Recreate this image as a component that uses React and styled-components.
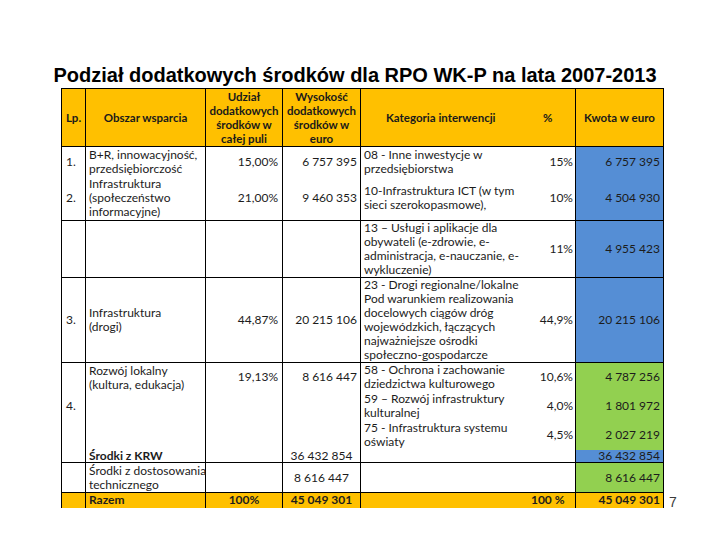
import React from 'react';
import styled, { createGlobalStyle } from 'styled-components';

const Global = createGlobalStyle`
  html, body { margin: 0; padding: 0; background: #fff; }
  #root { width: 720px; height: 540px; }
`;

const YELLOW = '#FFC000';
const BLUE = '#558ED5';
const GREEN = '#92D050';

const Slide = styled.div`
  width: 720px;
  height: 540px;
  box-sizing: border-box;
  background: #fff;
  display: flex;
  flex-direction: column;
  padding-top: 64px;
`;

const Title = styled.h1`
  margin: 0;
  font-family: "Liberation Sans", Arial, sans-serif;
  font-weight: 700;
  font-size: 20px;
  line-height: 22px;
  color: #000;
  text-align: center;
  padding-right: 10px;
`;

const Body = styled.div`
  display: flex;
  align-items: flex-end;
  padding-left: 61px;
  margin-top: 2px;
`;

const PageNo = styled.div`
  font-family: "Liberation Sans", Arial, sans-serif;
  font-size: 14px;
  line-height: 16px;
  color: #3a3a3a;
  margin-left: 5px;
  margin-bottom: -2px;
`;

const Table = styled.table`
  border-collapse: collapse;
  table-layout: fixed;
  width: 602px;
  font-family: "Lato", "Open Sans", sans-serif;
  font-size: 12px;
  color: #1c1c1c;
`;

const Row = styled.tr`
  height: ${p => p.$h}px;
`;

const Cell = styled.td`
  border: 1px solid #000;
  border-top-style: ${p => (p.$openTop ? 'hidden' : 'solid')};
  border-bottom-style: ${p => (p.$openBottom ? 'hidden' : 'solid')};
  border-right-style: ${p => (p.$openRight ? 'hidden' : 'solid')};
  padding: ${p => p.$pt || 0}px ${p => (p.$pr ?? 3)}px 0 ${p => (p.$pl ?? 3)}px;
  text-align: ${p => p.$align || 'left'};
  vertical-align: ${p => p.$valign || 'middle'};
  background: ${p => p.$bg || 'transparent'};
  font-weight: ${p => (p.$bold ? 700 : 400)};
  line-height: ${p => p.$lh || 14}px;
  white-space: nowrap;
`;

const Head = styled.th`
  border: 1px solid #000;
  border-right-style: ${p => (p.$openRight ? 'hidden' : 'solid')};
  background: ${YELLOW};
  font-weight: 700;
  font-size: 11.5px;
  text-align: center;
  vertical-align: middle;
  line-height: 14px;
  padding: 0;
  color: #1a1a1a;
  white-space: nowrap;
`;

const Lines = ({ t }) =>
  t.split('\n').map((l, i, a) => (
    <React.Fragment key={i}>
      {l}
      {i < a.length - 1 && <br />}
    </React.Fragment>
  ));

export default function App() {
  return (
    <>
      <Global />
      <Slide>
        <Title>Podział dodatkowych środków dla RPO WK-P na lata 2007-2013</Title>
        <Body>
          <Table>
            <colgroup>
              <col style={{ width: 24 }} />
              <col style={{ width: 120 }} />
              <col style={{ width: 77 }} />
              <col style={{ width: 78 }} />
              <col style={{ width: 160 }} />
              <col style={{ width: 55 }} />
              <col style={{ width: 88 }} />
            </colgroup>
            <thead>
              <Row $h={58}>
                <Head>Lp.</Head>
                <Head>Obszar wsparcia</Head>
                <Head><Lines t={'Udział\ndodatkowych\nśrodków w\ncałej puli'} /></Head>
                <Head><Lines t={'Wysokość\ndodatkowych\nśrodków  w\neuro'} /></Head>
                <Head $openRight>Kategoria interwencji</Head>
                <Head>%</Head>
                <Head>Kwota w euro</Head>
              </Row>
            </thead>
            <tbody>
              <Row $h={30}>
                <Cell $openBottom $pl={4}>1.</Cell>
                <Cell $openBottom><Lines t={'B+R, innowacyjność,\nprzedsiębiorczość'} /></Cell>
                <Cell $openBottom $align="right" $pr={4}>15,00%</Cell>
                <Cell $openBottom $align="right">6 757 395</Cell>
                <Cell $openBottom $openRight><Lines t={'08 - Inne inwestycje w\nprzedsiębiorstwa'} /></Cell>
                <Cell $openBottom $align="right" $pr={2}>15%</Cell>
                <Cell $openBottom $align="right" $bg={BLUE}>6 757 395</Cell>
              </Row>
              <Row $h={44}>
                <Cell $pl={4}>2.</Cell>
                <Cell><Lines t={'Infrastruktura\n(społeczeństwo\ninformacyjne)'} /></Cell>
                <Cell $align="right" $pr={4}>21,00%</Cell>
                <Cell $align="right">9 460 353</Cell>
                <Cell $openRight><Lines t={'10-Infrastruktura ICT (w tym\nsieci szerokopasmowe),'} /></Cell>
                <Cell $align="right" $pr={2}>10%</Cell>
                <Cell $align="right" $bg={BLUE}>4 504 930</Cell>
              </Row>
              <Row $h={57}>
                <Cell />
                <Cell />
                <Cell />
                <Cell />
                <Cell $openRight>
                  <Lines t={'13 – Usługi i aplikacje dla\nobywateli (e-zdrowie, e-\nadministracja, e-nauczanie, e-\nwykluczenie)'} />
                </Cell>
                <Cell $align="right" $pr={2}>11%</Cell>
                <Cell $align="right" $bg={BLUE}>4 955 423</Cell>
              </Row>
              <Row $h={85}>
                <Cell $pl={4}>3.</Cell>
                <Cell><Lines t={'Infrastruktura\n(drogi)'} /></Cell>
                <Cell $align="right" $pr={4}>44,87%</Cell>
                <Cell $align="right">20 215 106</Cell>
                <Cell $openRight>
                  <Lines t={'23 - Drogi regionalne/lokalne\nPod warunkiem realizowania\ndocelowych ciągów dróg\nwojewódzkich, łączących\nnajważniejsze ośrodki\nspołeczno-gospodarcze'} />
                </Cell>
                <Cell $align="right" $pr={2}>44,9%</Cell>
                <Cell $align="right" $bg={BLUE}>20 215 106</Cell>
              </Row>
              <Row $h={29}>
                <Cell rowSpan={3} $openBottom $pl={4}>4.</Cell>
                <Cell rowSpan={3} $openBottom $valign="top" $pt={1}>
                  <Lines t={'Rozwój lokalny\n(kultura, edukacja)'} />
                </Cell>
                <Cell $openBottom $align="right" $pr={4}>19,13%</Cell>
                <Cell $openBottom $align="right">8 616 447</Cell>
                <Cell $openBottom $openRight><Lines t={'58 - Ochrona i zachowanie\ndziedzictwa kulturowego'} /></Cell>
                <Cell $openBottom $align="right" $pr={2}>10,6%</Cell>
                <Cell $openBottom $align="right" $bg={GREEN}>4 787 256</Cell>
              </Row>
              <Row $h={29}>
                <Cell rowSpan={3} $openTop />
                <Cell rowSpan={2} $openTop $openBottom />
                <Cell $openBottom $openRight><Lines t={'59 – Rozwój infrastruktury\nkulturalnej'} /></Cell>
                <Cell $openBottom $align="right" $pr={2}>4,0%</Cell>
                <Cell $openBottom $align="right" $bg={GREEN}>1 801 972</Cell>
              </Row>
              <Row $h={29}>
                <Cell $openBottom $openRight><Lines t={'75 - Infrastruktura systemu\noświaty'} /></Cell>
                <Cell $openBottom $align="right" $pr={2}>4,5%</Cell>
                <Cell $openBottom $align="right" $bg={GREEN}>2 027 219</Cell>
              </Row>
              <Row $h={13}>
                <Cell $openTop $lh={12} />
                <Cell $openTop $bold $lh={12}>Środki z KRW</Cell>
                <Cell $openTop $align="center" $lh={12}>36 432 854</Cell>
                <Cell $openTop $openRight $lh={12} />
                <Cell $openTop $lh={12} />
                <Cell $openTop $align="right" $bg={BLUE} $lh={12}>36 432 854</Cell>
              </Row>
              <Row $h={30}>
                <Cell />
                <Cell><Lines t={'Środki z dostosowania\ntechnicznego'} /></Cell>
                <Cell />
                <Cell $align="center">8 616 447</Cell>
                <Cell $openRight />
                <Cell />
                <Cell $align="right" $bg={GREEN}>8 616 447</Cell>
              </Row>
              <Row $h={15}>
                <Cell $bg={YELLOW} $openBottom $lh={14} />
                <Cell $bg={YELLOW} $openBottom $lh={14} $bold>Razem</Cell>
                <Cell $bg={YELLOW} $openBottom $lh={14} $bold $align="center">100%</Cell>
                <Cell $bg={YELLOW} $openBottom $lh={14} $bold $align="center">45 049 301</Cell>
                <Cell $bg={YELLOW} $openBottom $openRight $lh={14} />
                <Cell $bg={YELLOW} $openBottom $lh={14} $bold $align="center">100 %</Cell>
                <Cell $bg={YELLOW} $openBottom $lh={14} $bold $align="right">45 049 301</Cell>
              </Row>
            </tbody>
          </Table>
          <PageNo>7</PageNo>
        </Body>
      </Slide>
    </>
  );
}
